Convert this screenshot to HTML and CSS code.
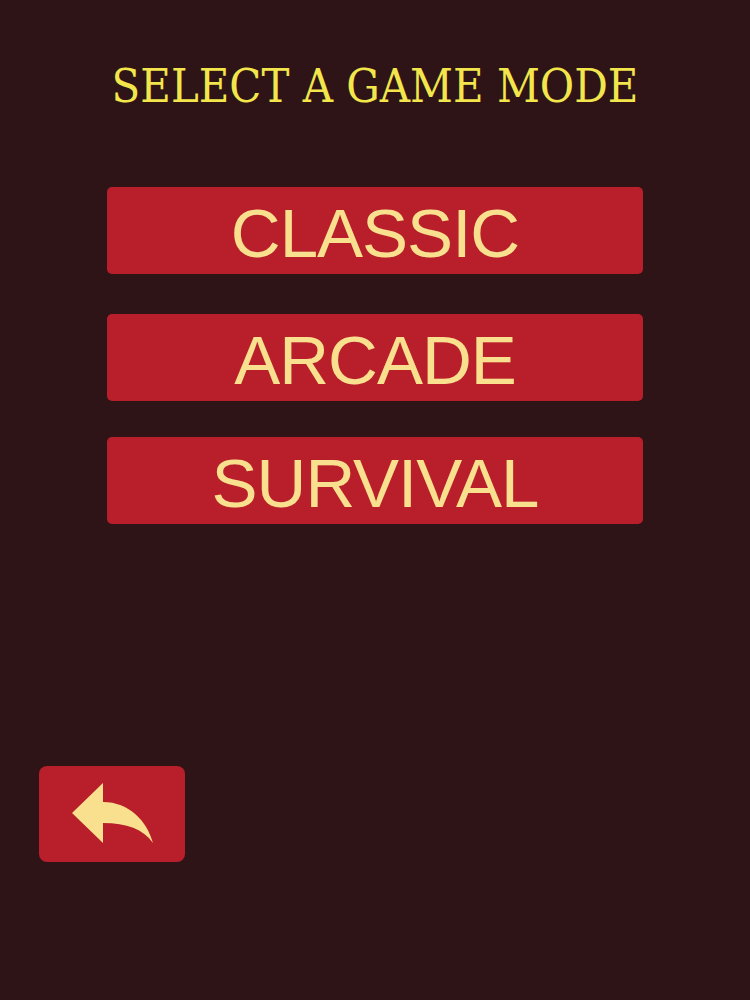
FILE: index.html
```html
<!DOCTYPE html>
<html>
<head>
<meta charset="utf-8">
<link rel="stylesheet" href="styles.css">
</head>
<body>
<div class="screen">
  <h1 class="title">SELECT A GAME MODE</h1>
  <div class="modes">
    <button class="mode">CLASSIC</button>
    <button class="mode mode-arcade">ARCADE</button>
    <button class="mode mode-survival">SURVIVAL</button>
  </div>
  <button class="back" aria-label="Back">
    <svg width="146" height="96" viewBox="0 0 146 96">
      <path d="M33 47 L64 17 L64 36 C90 36 108 55 114 77 C104 63 88 57 64 57 L64 77 Z" fill="#f8e08e"/>
    </svg>
  </button>
</div>
</body>
</html>
```
FILE: styles.css
```css
html, body {
  margin: 0;
  padding: 0;
  background: #2e1416;
}
.screen {
  width: 750px;
  height: 1000px;
  display: flex;
  flex-direction: column;
  align-items: center;
}
.title {
  margin: 58px 0 0 0;
  font-family: "DejaVu Serif Condensed", "DejaVu Serif", serif;
  font-stretch: condensed;
  font-weight: normal;
  font-size: 46.6px;
  line-height: 56px;
  color: #f2e64c;
  letter-spacing: 0;
}
.modes {
  margin-top: 73px;
  display: flex;
  flex-direction: column;
  width: 536px;
}
.mode {
  height: 87px;
  border: none;
  border-radius: 5px;
  background: #b91f2b;
  color: #f8e08e;
  font-family: "Liberation Sans", Arial, sans-serif;
  font-size: 69px;
  letter-spacing: -1px;
  line-height: 81px;
  padding: 6px 0 0 0;
}
.mode-arcade { margin-top: 40px; }
.mode-survival { margin-top: 36px; }
.back {
  align-self: flex-start;
  margin: 242px 0 0 39px;
  width: 146px;
  height: 96px;
  padding: 0;
  border: none;
  border-radius: 8px;
  background: #b91f2b;
  display: block;
}
.back svg { display: block; }
```
